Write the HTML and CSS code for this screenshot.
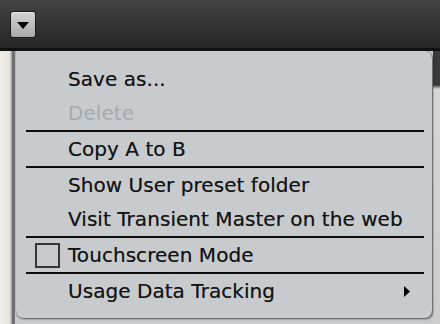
FILE: index.html
```html
<!DOCTYPE html>
<html>
<head>
<meta charset="utf-8">
<link rel="stylesheet" href="styles.css">
</head>
<body>
<div class="app">
  <header class="topbar">
    <button class="menu-btn" aria-label="Menu">
      <svg width="12" height="7" viewBox="0 0 12 7"><path d="M0 0H12L6 7Z" fill="#000"/></svg>
    </button>
  </header>
  <main class="content">
    <div class="left-panel"></div>
    <div class="center"></div>
    <div class="right-panel"></div>
  </main>
  <div class="dropdown">
    <div class="item">Save as...</div>
    <div class="item disabled">Delete</div>
    <div class="sep"></div>
    <div class="item">Copy A to B</div>
    <div class="sep"></div>
    <div class="item">Show User preset folder</div>
    <div class="item">Visit Transient Master on the web</div>
    <div class="sep"></div>
    <div class="item check"><span class="box"></span>Touchscreen Mode</div>
    <div class="sep"></div>
    <div class="item sub">Usage Data Tracking
      <svg class="arrow" width="6" height="11" viewBox="0 0 6 11"><path d="M0 0L6 5.5L0 11Z" fill="#000"/></svg>
    </div>
  </div>
</div>
</body>
</html>
```
FILE: styles.css
```css
html, body {
  margin: 0;
  padding: 0;
}
body {
  width: 440px;
  height: 324px;
  overflow: hidden;
  background: #8c8c8c;
  font-family: "DejaVu Sans", sans-serif;
}
.app {
  position: relative;
  width: 440px;
  height: 324px;
  display: flex;
  flex-direction: column;
}
.topbar {
  flex: none;
  height: 51px;
  box-sizing: border-box;
  background: linear-gradient(#444444, #262626);
  border-bottom: 3px solid #111;
  display: flex;
  align-items: flex-start;
  padding: 11px 0 0 10px;
}
.menu-btn {
  width: 26px;
  height: 27px;
  padding: 2px 0 0;
  border: 1px solid #1a1a1a;
  border-radius: 3px;
  background: linear-gradient(#d2d2d2, #a9a9a9);
  box-shadow: inset 0 1px 0 #e8e8e8;
  display: flex;
  align-items: center;
  justify-content: center;
}
.content {
  flex: 1;
  display: flex;
}
.left-panel {
  width: 12px;
  background: linear-gradient(90deg, #f1eeea, #e6e2de 80%, #9a9896);
  border-right: 3px solid #6f6f6f;
}
.center {
  flex: 1;
  background: #c7cbce;
}
.right-panel {
  width: 7px;
  background: linear-gradient(#3a3a3c 0, #3a3a3c 34px, #d8d6d4 38px, #cfcdcb 100%);
}
.dropdown {
  position: absolute;
  left: 16px;
  top: 51px;
  width: 416px;
  height: 267px;
  box-sizing: border-box;
  background: #c7cbce;
  border-radius: 0 7px 7px 7px;
  box-shadow: 1px 1px 2px rgba(0,0,0,0.55), 0 0 1px rgba(0,0,0,0.6);
  padding: 11px 8px 0 10px;
  display: flex;
  flex-direction: column;
}
.item {
  height: 34px;
  display: flex;
  align-items: center;
  padding-left: 42px;
  font-size: 20px;
  letter-spacing: 0.05px;
  color: #141414;
  text-shadow: 0 0 0.6px rgba(20,20,20,0.6);
  flex: none;
}
.item.disabled {
  color: #a6aaad;
  text-shadow: none;
}
.sep {
  height: 2px;
  background: #0c0c0c;
  flex: none;
}
.item.check {
  padding-left: 9px;
}
.box {
  width: 21px;
  height: 21px;
  border: 2px solid #363636;
  margin-right: 8px;
  flex: none;
}
.item.sub {
  justify-content: space-between;
  padding-right: 14px;
}
```
